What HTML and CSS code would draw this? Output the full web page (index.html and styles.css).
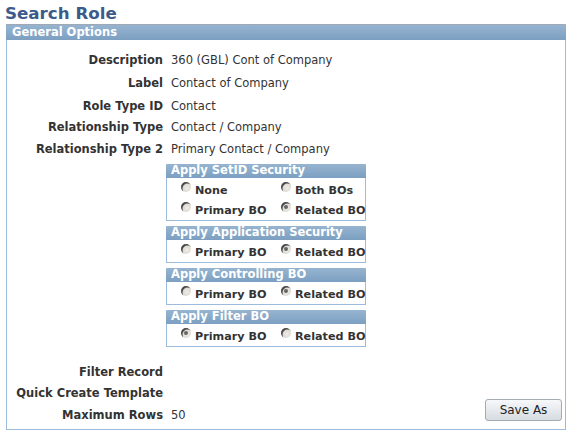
FILE: index.html
```html
<!DOCTYPE html>
<html>
<head>
<meta charset="utf-8">
<link rel="stylesheet" href="styles.css">
</head>
<body>
<h1 class="title">Search Role</h1>
<div class="group">
  <div class="group-head">General Options</div>
  <div class="group-body">
    <div class="fields fields-top">
      <div class="lbl">Description</div><div class="val">360 (GBL) Cont of Company</div>
      <div class="lbl">Label</div><div class="val">Contact of Company</div>
      <div class="lbl">Role Type ID</div><div class="val">Contact</div>
      <div class="lbl">Relationship Type</div><div class="val">Contact / Company</div>
      <div class="lbl">Relationship Type 2</div><div class="val">Primary Contact / Company</div>
    </div>
    <div class="subs">
      <div class="sub">
        <div class="sub-head">Apply SetID Security</div>
        <div class="sub-body">
          <label class="opt"><span class="radio"></span>None</label>
          <label class="opt"><span class="radio"></span>Both BOs</label>
          <label class="opt"><span class="radio"></span>Primary BO</label>
          <label class="opt"><span class="radio on"></span>Related BO</label>
        </div>
      </div>
      <div class="sub">
        <div class="sub-head">Apply Application Security</div>
        <div class="sub-body">
          <label class="opt"><span class="radio"></span>Primary BO</label>
          <label class="opt"><span class="radio on"></span>Related BO</label>
        </div>
      </div>
      <div class="sub">
        <div class="sub-head">Apply Controlling BO</div>
        <div class="sub-body">
          <label class="opt"><span class="radio"></span>Primary BO</label>
          <label class="opt"><span class="radio on"></span>Related BO</label>
        </div>
      </div>
      <div class="sub">
        <div class="sub-head">Apply Filter BO</div>
        <div class="sub-body">
          <label class="opt"><span class="radio on"></span>Primary BO</label>
          <label class="opt"><span class="radio"></span>Related BO</label>
        </div>
      </div>
    </div>
    <div class="bottom">
      <div class="fields fields-low">
        <div class="lbl">Filter Record</div><div class="val"></div>
        <div class="lbl">Quick Create Template</div><div class="val"></div>
        <div class="lbl">Maximum Rows</div><div class="val">50</div>
      </div>
      <button class="btn">Save As</button>
    </div>
  </div>
</div>
</body>
</html>
```
FILE: styles.css
```css
html, body {
  margin: 0;
  padding: 0;
  background: #ffffff;
  font-family: "DejaVu Sans", Verdana, sans-serif;
  font-size: 11.5px;
  color: #333333;
}
.title {
  margin: 0;
  padding: 4px 0 0 5px;
  height: 20px;
  font-size: 16.7px;
  line-height: 18px;
  font-weight: bold;
  color: #3c5a8a;
}
.group {
  margin-left: 6px;
  width: 558px;
  border: 1px solid #9dbcdb;
  border-top: none;
  height: 405px;
}
.group-head {
  margin: 0 -1px;
  height: 16px;
  line-height: 15px;
  padding-left: 6px;
  background: linear-gradient(#96b4d0, #7c9fc1);
  border-top: 1px solid #a0a8b4;
  border-radius: 0 2px 0 0;
  color: #ffffff;
  font-weight: bold;
  font-size: 11.5px;
  box-sizing: border-box;
}
.group-body {
  padding-top: 9px;
}
.fields {
  display: grid;
  grid-template-columns: 156px 1fr;
  column-gap: 8px;
  align-items: center;
}
.fields-top {
  grid-template-rows: 22px 24px 21px 22px 22px;
}
.lbl {
  text-align: right;
  font-weight: bold;
  color: #333333;
  white-space: nowrap;
}
.val {
  color: #333333;
  white-space: nowrap;
}
.subs {
  margin-top: 4px;
  padding-left: 159px;
  display: flex;
  flex-direction: column;
  gap: 5px;
}
.sub {
  width: 200px;
  border: 1px solid #9dbcdb;
  border-top: none;
  box-sizing: border-box;
}
.sub-head {
  margin: 0 -1px;
  height: 14px;
  line-height: 13px;
  padding-left: 5px;
  background: linear-gradient(#96b4d0, #7c9fc1);
  border-radius: 2px 2px 0 0;
  color: #ffffff;
  font-weight: bold;
  font-size: 11.5px;
}
.sub-body {
  display: grid;
  grid-template-columns: 100px 1fr;
  grid-auto-rows: 20px;
  align-items: center;
  padding: 2px 0 0 14px;
}
.opt {
  display: flex;
  align-items: center;
  gap: 4px;
  font-weight: bold;
  font-size: 11.2px;
  color: #333333;
  white-space: nowrap;
}
.radio {
  width: 10px;
  height: 10px;
  border-radius: 50%;
  background: radial-gradient(circle at 60% 60%, #efece6 0, #d6d3cc 70%);
  box-shadow: inset 1.5px 1.5px 0 #4a4a4a;
  position: relative;
  top: -3px;
}
.radio.on::after {
  content: "";
  position: absolute;
  left: 3px;
  top: 3px;
  width: 4px;
  height: 4px;
  border-radius: 50%;
  background: #666666;
}
.bottom {
  margin-top: 14px;
  display: flex;
  align-items: flex-end;
  justify-content: space-between;
}
.fields-low {
  grid-template-columns: 156px 40px;
  grid-template-rows: 21px 21px 24px;
}
.btn {
  margin: 0 3px 6px 0;
  width: 77px;
  height: 22px;
  font-family: "DejaVu Sans", Verdana, sans-serif;
  font-size: 12px;
  color: #222222;
  background: linear-gradient(#f6f8fa, #d7dce2);
  border: 1px solid #a3abb4;
  border-radius: 3px;
  padding: 0;
}
```
